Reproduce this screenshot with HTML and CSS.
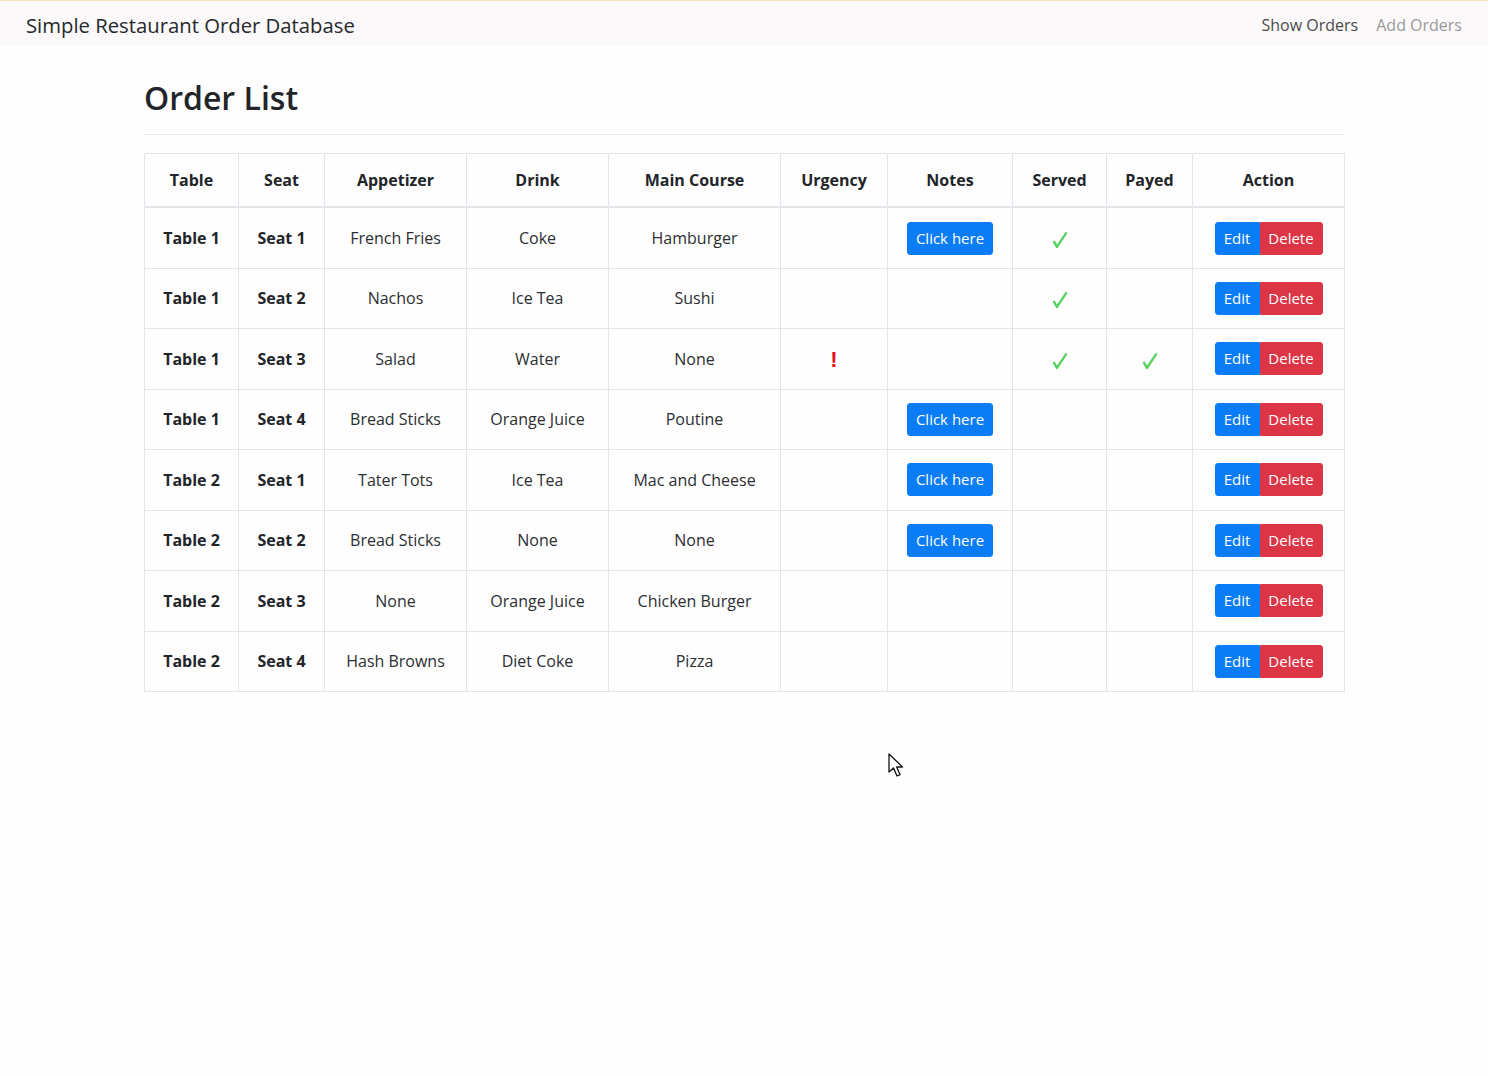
FILE: index.html
```html
<!DOCTYPE html>
<html lang="en">
<head>
<meta charset="utf-8">
<title>Simple Restaurant Order Database</title>
<link rel="stylesheet" href="styles.css">
</head>
<body>
<nav class="navbar">
  <span class="brand">Simple Restaurant Order Database</span>
  <div class="nav-links">
    <a class="nav-link active" href="#">Show Orders</a>
    <a class="nav-link" href="#">Add Orders</a>
  </div>
</nav>
<main class="container">
  <h2 class="title">Order List</h2>
  <hr class="rule">
  <table class="orders">
    <colgroup>
      <col class="c1"><col class="c2"><col class="c3"><col class="c4"><col class="c5">
      <col class="c6"><col class="c7"><col class="c8"><col class="c9"><col class="c10">
    </colgroup>
    <thead>
      <tr><th>Table</th><th>Seat</th><th>Appetizer</th><th>Drink</th><th>Main Course</th><th>Urgency</th><th>Notes</th><th>Served</th><th>Payed</th><th>Action</th></tr>
    </thead>
    <tbody>
      <tr class="odd"><th>Table 1</th><th>Seat 1</th><td>French Fries</td><td>Coke</td><td>Hamburger</td><td></td><td><button class="btn btn-blue">Click here</button></td><td><svg class="check" width="16" height="18" viewBox="0 0 16 18"><path d="M0.6 10.6 L2.6 9.4 L5.1 13.4 L13.7 0.8 L15.5 1.9 L5.7 17 L4.1 17 Z" fill="#55d25c"/></svg></td><td></td><td><div class="btn-group"><button class="btn btn-blue left">Edit</button><button class="btn btn-red right">Delete</button></div></td></tr>
      <tr class="even"><th>Table 1</th><th>Seat 2</th><td>Nachos</td><td>Ice Tea</td><td>Sushi</td><td></td><td></td><td><svg class="check" width="16" height="18" viewBox="0 0 16 18"><path d="M0.6 10.6 L2.6 9.4 L5.1 13.4 L13.7 0.8 L15.5 1.9 L5.7 17 L4.1 17 Z" fill="#55d25c"/></svg></td><td></td><td><div class="btn-group"><button class="btn btn-blue left">Edit</button><button class="btn btn-red right">Delete</button></div></td></tr>
      <tr class="odd"><th>Table 1</th><th>Seat 3</th><td>Salad</td><td>Water</td><td>None</td><td><span class="urgent">!</span></td><td></td><td><svg class="check" width="16" height="18" viewBox="0 0 16 18"><path d="M0.6 10.6 L2.6 9.4 L5.1 13.4 L13.7 0.8 L15.5 1.9 L5.7 17 L4.1 17 Z" fill="#55d25c"/></svg></td><td><svg class="check" width="16" height="18" viewBox="0 0 16 18"><path d="M0.6 10.6 L2.6 9.4 L5.1 13.4 L13.7 0.8 L15.5 1.9 L5.7 17 L4.1 17 Z" fill="#55d25c"/></svg></td><td><div class="btn-group"><button class="btn btn-blue left">Edit</button><button class="btn btn-red right">Delete</button></div></td></tr>
      <tr class="even"><th>Table 1</th><th>Seat 4</th><td>Bread Sticks</td><td>Orange Juice</td><td>Poutine</td><td></td><td><button class="btn btn-blue">Click here</button></td><td></td><td></td><td><div class="btn-group"><button class="btn btn-blue left">Edit</button><button class="btn btn-red right">Delete</button></div></td></tr>
      <tr class="odd"><th>Table 2</th><th>Seat 1</th><td>Tater Tots</td><td>Ice Tea</td><td>Mac and Cheese</td><td></td><td><button class="btn btn-blue">Click here</button></td><td></td><td></td><td><div class="btn-group"><button class="btn btn-blue left">Edit</button><button class="btn btn-red right">Delete</button></div></td></tr>
      <tr class="even"><th>Table 2</th><th>Seat 2</th><td>Bread Sticks</td><td>None</td><td>None</td><td></td><td><button class="btn btn-blue">Click here</button></td><td></td><td></td><td><div class="btn-group"><button class="btn btn-blue left">Edit</button><button class="btn btn-red right">Delete</button></div></td></tr>
      <tr class="odd"><th>Table 2</th><th>Seat 3</th><td>None</td><td>Orange Juice</td><td>Chicken Burger</td><td></td><td></td><td></td><td></td><td><div class="btn-group"><button class="btn btn-blue left">Edit</button><button class="btn btn-red right">Delete</button></div></td></tr>
      <tr class="even"><th>Table 2</th><th>Seat 4</th><td>Hash Browns</td><td>Diet Coke</td><td>Pizza</td><td></td><td></td><td></td><td></td><td><div class="btn-group"><button class="btn btn-blue left">Edit</button><button class="btn btn-red right">Delete</button></div></td></tr>
    </tbody>
  </table>
</main>
<svg class="cursor" width="18" height="26" viewBox="0 0 18 26" aria-hidden="true">
  <path d="M1 1 L1 19 L5.5 15 L9 23 L12 21.6 L8.6 14 L14.5 14 Z" fill="#fff" stroke="#111" stroke-width="1.3" stroke-linejoin="round"/>
</svg>
</body>
</html>
```
FILE: styles.css
```css
html, body {
  margin: 0;
  padding: 0;
}
body {
  background: #fffefe;
  color: #212529;
  font-family: "Open Sans", "Noto Sans", "Liberation Sans", sans-serif;
  min-height: 1076px;
  position: relative;
}
.navbar {
  height: 45px;
  border-top: 1px solid #f6e2bf;
  background: #fcf9fa;
  display: flex;
  align-items: center;
  justify-content: space-between;
  padding: 0 26px;
}
.brand {
  font-size: 20.3px;
  color: #25282c;
  padding-top: 2px;
}
.nav-links {
  display: flex;
  gap: 18px;
  padding-top: 2px;
}
.nav-link {
  font-size: 16px;
  color: #9a9a9a;
  text-decoration: none;
}
.nav-link.active {
  color: #4a4a4a;
}
.container {
  width: 1200px;
  margin-left: 144px;
}
.title {
  margin: 0;
  padding-top: 33px;
  font-size: 32px;
  font-weight: 600;
  line-height: 1.2;
  color: #212529;
}
.rule {
  margin: 17px 0 0 0;
  border: 0;
  border-top: 1px solid #e9e9ef;
}
.orders {
  margin-top: 18px;
  width: 1200px;
  table-layout: fixed;
  border-collapse: collapse;
  font-size: 16px;
}
.c1 { width: 94px; }
.c2 { width: 86px; }
.c3 { width: 142px; }
.c4 { width: 142px; }
.c5 { width: 172px; }
.c6 { width: 107px; }
.c7 { width: 125px; }
.c8 { width: 94px; }
.c9 { width: 86px; }
.c10 { width: 152px; }
.orders th, .orders td {
  border: 1px solid #e6e4ea;
  text-align: center;
  vertical-align: middle;
  padding: 0;
}
.orders thead th {
  height: 52px;
  border-bottom: 2px solid #e6e4ea;
  font-weight: 700;
}
.orders tbody tr.odd { height: 61px; }
.orders tbody tr.even { height: 60px; }
.orders tbody th {
  font-weight: 700;
}
.orders tbody td {
  color: #2b2e32;
}
.btn {
  font-family: inherit;
  font-size: 15px;
  color: #fff;
  border: 1px solid transparent;
  border-radius: 3px;
  height: 33px;
  padding: 0 8px;
  line-height: 31px;
  cursor: pointer;
}
.btn-blue {
  background: #0a7cf6;
  border-color: #0a7cf6;
}
.btn-red {
  background: #dc3545;
  border-color: #dc3545;
}
.btn-group {
  display: inline-flex;
  vertical-align: middle;
}
.btn.left {
  border-radius: 3px 0 0 3px;
  width: 45px;
  padding: 0;
}
.btn.right {
  border-radius: 0 3px 3px 0;
  width: 63px;
  padding: 0;
}
.check {
  display: inline-block;
  vertical-align: middle;
}
.urgent {
  display: inline-block;
  padding-top: 3px;
  color: #e3131d;
  font-weight: 700;
  font-size: 22px;
  font-family: "Liberation Sans", sans-serif;
}
.cursor {
  position: absolute;
  left: 888px;
  top: 753px;
}
```
